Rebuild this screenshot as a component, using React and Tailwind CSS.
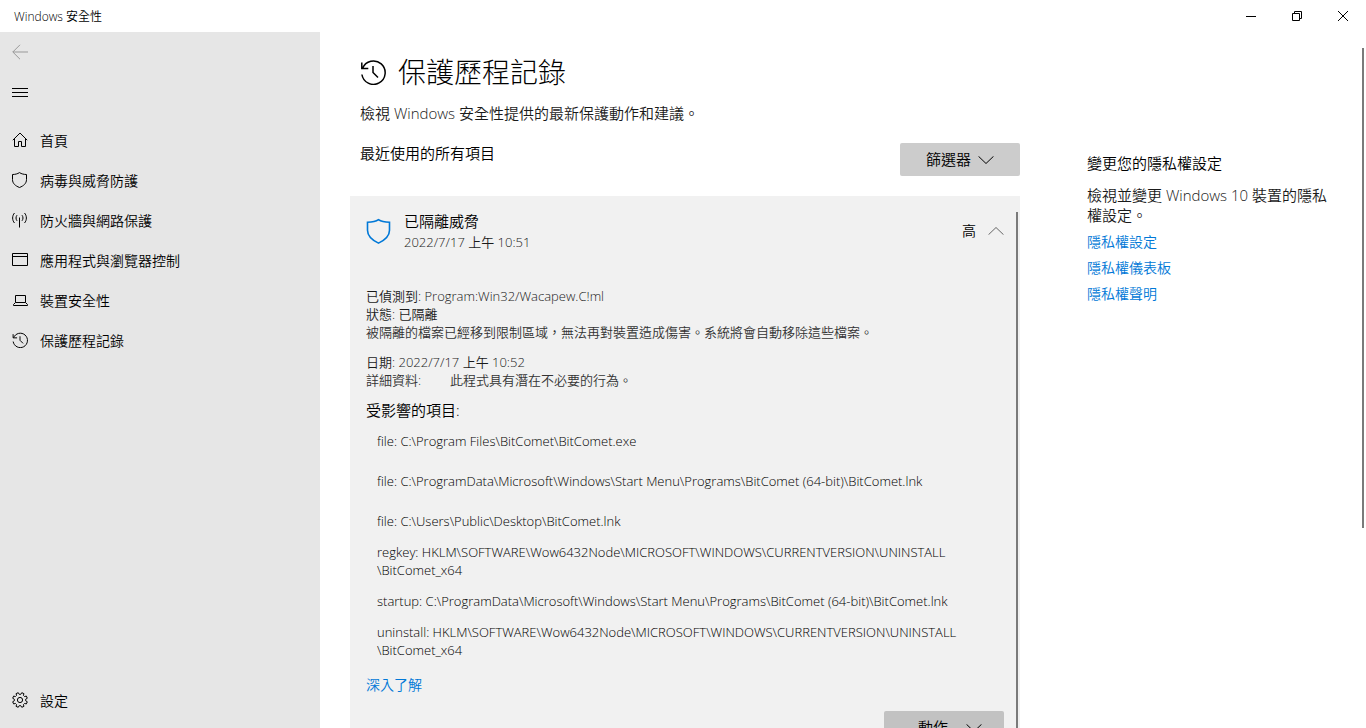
const svgProps = {
  fill: 'none',
  stroke: 'currentColor',
  strokeWidth: 1,
  'aria-hidden': true,
}

function BackIcon() {
  return (
    <svg className="size-4" viewBox="0 0 16 16" {...svgProps}>
      <path d="M16 8H.8M8 .8L.8 8 8 15.2" />
    </svg>
  )
}

function MenuIcon() {
  return (
    <svg className="size-4" viewBox="0 0 16 16" {...svgProps}>
      <path d="M0 4.5h16M0 8.5h16M0 12.5h16" />
    </svg>
  )
}

function HomeIcon() {
  return (
    <svg className="size-4" viewBox="0 0 16 16" {...svgProps}>
      <path d="M.8 8.2L8 1l7.2 7.2M2.5 6.8v7.7h4v-5h3v5h4V6.8" />
    </svg>
  )
}

function ShieldIcon() {
  return (
    <svg className="size-4" viewBox="0 0 16 16" {...svgProps}>
      <path d="M7.5.6C5.6 1.9 3 2.5.5 2.5v5c0 4 2.8 6.3 7 8 4.2-1.7 7-4 7-8v-5C12 2.5 9.4 1.9 7.5.6z" />
    </svg>
  )
}

function NetworkIcon() {
  return (
    <svg className="size-4" viewBox="0 0 16 16" {...svgProps}>
      <path d="M7.5 5.5v10M2.5 1c-2.5 2.8-2.5 7.2 0 10M12.5 1c2.5 2.8 2.5 7.2 0 10M5 3.2c-1.3 1.7-1.3 3.9 0 5.6M10 3.2c1.3 1.7 1.3 3.9 0 5.6" />
    </svg>
  )
}

function AppIcon() {
  return (
    <svg className="size-4" viewBox="0 0 16 16" {...svgProps}>
      <path d="M.5 1.5h15v12H.5zM.5 4.5h15" />
    </svg>
  )
}

function LaptopIcon() {
  return (
    <svg className="size-4" viewBox="0 0 16 16" {...svgProps}>
      <path d="M3.5 3.5h10v7h-10zM3.5 10.5l-2 2v1h14v-1l-2-2" />
    </svg>
  )
}

function HistoryIcon({ className = 'size-4', strokeWidth = 1.6 }) {
  return (
    <svg className={className} viewBox="0 0 26 26" {...svgProps} strokeWidth={strokeWidth}>
      <path d="M2.6 9.3A11.7 11.7 0 1 1 1.9 15.5M1.8 3.5v6h6.5M13 7v6.5l5 5" />
    </svg>
  )
}

function GearIcon() {
  const teeth = Array.from({ length: 8 }, (_, i) => {
    return [[-15, 5.7], [-9, 7.5], [9, 7.5], [15, 5.7]].map(([offset, r]) => {
      const a = ((i * 45 + 22.5 + offset) * Math.PI) / 180
      return `${(8 + r * Math.cos(a)).toFixed(2)} ${(8 + r * Math.sin(a)).toFixed(2)}`
    })
  }).flat()

  return (
    <svg className="size-4" viewBox="0 0 16 16" {...svgProps} strokeLinejoin="round">
      <path d={`M${teeth.join('L')}z`} />
      <circle cx="8" cy="8" r="2.6" />
    </svg>
  )
}

function Chevron({ up = false }) {
  return (
    <svg className="h-2 w-4" viewBox="0 0 16 8" {...svgProps}>
      <path d={up ? 'M.5 7.7L8 .5l7.5 7.2' : 'M.5.3L8 7.5 15.5.3'} />
    </svg>
  )
}

const navItems = [
  { label: '首頁', icon: HomeIcon },
  { label: '病毒與威脅防護', icon: ShieldIcon },
  { label: '防火牆與網路保護', icon: NetworkIcon },
  { label: '應用程式與瀏覽器控制', icon: AppIcon },
  { label: '裝置安全性', icon: LaptopIcon },
  { label: '保護歷程記錄', icon: HistoryIcon },
]

const affectedItems = [
  { text: 'file: C:\\Program Files\\BitComet\\BitComet.exe', gap: 'mb-[22px]' },
  {
    text: 'file: C:\\ProgramData\\Microsoft\\Windows\\Start Menu\\Programs\\BitComet (64-bit)\\BitComet.lnk',
    gap: 'mb-[22px]',
  },
  { text: 'file: C:\\Users\\Public\\Desktop\\BitComet.lnk', gap: 'mb-[13px]' },
  {
    text: 'regkey: HKLM\\SOFTWARE\\Wow6432Node\\MICROSOFT\\WINDOWS\\CURRENTVERSION\\UNINSTALL',
    rest: '\\BitComet_x64',
    gap: 'mb-[13px]',
  },
  {
    text: 'startup: C:\\ProgramData\\Microsoft\\Windows\\Start Menu\\Programs\\BitComet (64-bit)\\BitComet.lnk',
    gap: 'mb-[13px]',
  },
  {
    text: 'uninstall: HKLM\\SOFTWARE\\Wow6432Node\\MICROSOFT\\WINDOWS\\CURRENTVERSION\\UNINSTALL',
    rest: '\\BitComet_x64',
    gap: 'mb-4',
  },
]

const privacyLinks = ['隱私權設定', '隱私權儀表板', '隱私權聲明']

function TitleBar() {
  return (
    <header className="flex h-8 shrink-0 items-center justify-between pl-[14px]">
      <span className="pt-[2px] text-xs">Windows 安全性</span>
      <div className="flex h-full">
        <button type="button" aria-label="最小化" className="flex w-[46px] items-center justify-center">
          <svg className="size-[10px]" viewBox="0 0 10 10" {...svgProps}>
            <path d="M0 5.5h10" />
          </svg>
        </button>
        <button type="button" aria-label="還原" className="flex w-[46px] items-center justify-center">
          <svg className="size-[10px]" viewBox="0 0 10 10" {...svgProps}>
            <path d="M.5 2.5h7v7h-7zM2.5 2.5v-2h7v7h-2" />
          </svg>
        </button>
        <button type="button" aria-label="關閉" className="flex w-[46px] items-center justify-center">
          <svg className="size-[10px]" viewBox="0 0 10 10" {...svgProps}>
            <path d="M0 0l10 10M10 0L0 10" />
          </svg>
        </button>
      </div>
    </header>
  )
}

function NavItem({ label, icon: Icon }) {
  return (
    <a href="#" className="flex h-10 items-center gap-3 px-3 text-sm">
      <Icon />
      <span className="pt-px">{label}</span>
    </a>
  )
}

function Sidebar() {
  return (
    <aside className="flex w-80 shrink-0 flex-col bg-[#e6e6e6] pb-2">
      <button type="button" aria-label="上一頁" className="flex h-10 items-center px-3 text-[#999999]">
        <BackIcon />
      </button>
      <button type="button" aria-label="功能表" className="flex h-10 items-center px-3">
        <MenuIcon />
      </button>
      <nav className="mt-2 flex flex-1 flex-col">
        {navItems.map((item) => (
          <NavItem key={item.label} {...item} />
        ))}
        <div className="mt-auto">
          <NavItem label="設定" icon={GearIcon} />
        </div>
      </nav>
    </aside>
  )
}

function ThreatCard() {
  return (
    <section className="mt-5 flex min-h-0 flex-1 overflow-hidden bg-[#f1f1f1] pl-4">
      <div className="min-w-0 flex-1 pt-[14px] pr-3">
        <div className="flex items-center">
          <svg
            className="size-[26px] shrink-0 text-[#0078d7]"
            viewBox="0 0 26 26"
            {...svgProps}
            strokeWidth="1.6"
          >
            <path d="M12.5 1.7C9.5 3.8 5 4.2 1.5 4.2v8c0 6 4.5 9.8 11 12.9 6.5-3.1 11-6.9 11-12.9v-8c-3.5 0-8-.4-11-2.5z" />
          </svg>
          <div className="ml-3 flex-1">
            <h2 className="text-[15px] leading-[22px]">已隔離威脅</h2>
            <p className="text-[13px] leading-5 text-[#1a1a1a]">2022/7/17 上午 10:51</p>
          </div>
          <span className="text-sm">高</span>
          <button type="button" aria-label="收合" className="ml-3 flex h-8 items-center text-[#666666]">
            <Chevron up />
          </button>
        </div>

        <div className="mt-[35px] text-[13px] leading-[18px] text-[#1a1a1a]">
          <p>已偵測到: Program:Win32/Wacapew.C!ml</p>
          <p>狀態: 已隔離</p>
          <p className="text-[#333333]">
            被隔離的檔案已經移到限制區域，無法再對裝置造成傷害。系統將會自動移除這些檔案。
          </p>
          <p className="mt-3">日期: 2022/7/17 上午 10:52</p>
          <p className="flex text-[#333333]">
            <span className="w-[84px]">詳細資料:</span>
            <span>此程式具有潛在不必要的行為。</span>
          </p>
        </div>

        <h3 className="mt-[11px] text-[15px] leading-5">受影響的項目:</h3>
        <ul className="mt-3 pl-[11px] text-[13px] leading-[18px] text-black">
          {affectedItems.map((item) => (
            <li key={item.text} className={item.gap}>
              {item.text}
              {item.rest && <span className="block">{item.rest}</span>}
            </li>
          ))}
        </ul>
        <a href="#" className="block text-sm text-[#0078d7]">
          深入了解
        </a>
        <button
          type="button"
          className="mt-4 ml-auto flex h-[33px] w-[120px] items-center gap-[18px] rounded-xs bg-[#c2c2c2] pl-[34px] text-[15px]"
        >
          動作
          <Chevron />
        </button>
      </div>
      <div className="mt-4 mr-[2px] w-[2px] bg-[#7a7a7a]" />
    </section>
  )
}

export default function App() {
  return (
    <div className="flex h-screen flex-col overflow-hidden bg-white font-['Open_Sans','Noto_Sans_CJK_TC',sans-serif] font-[350] text-black">
      <TitleBar />
      <div className="flex min-h-0 flex-1">
        <Sidebar />
        <main className="flex min-w-0 flex-1 pl-[30px]">
          <div className="flex min-w-0 flex-1 flex-col pt-5">
            <div className="flex items-center gap-3 pl-[10px]">
              <HistoryIcon className="size-[26px]" strokeWidth={1.5} />
              <h1 className="text-[28px] leading-10 font-light">保護歷程記錄</h1>
            </div>
            <p className="mt-[11px] pl-[10px] text-[15px] leading-5 text-[#1a1a1a]">
              檢視 Windows 安全性提供的最新保護動作和建議。
            </p>
            <div className="mt-5 flex justify-between pl-[10px]">
              <h2 className="text-[15px] leading-5">最近使用的所有項目</h2>
              <button
                type="button"
                className="flex h-[33px] w-[120px] items-center justify-center gap-[7px] rounded-xs bg-[#cccccc] text-[15px]"
              >
                篩選器
                <Chevron />
              </button>
            </div>
            <ThreatCard />
          </div>

          <aside className="ml-[67px] w-[246px] shrink-0 pt-[121px]">
            <h2 className="text-[15px] leading-5">變更您的隱私權設定</h2>
            <p className="mt-3 text-[15px] leading-5 text-[#1a1a1a]">
              檢視並變更 Windows 10 裝置的隱私權設定。
            </p>
            <ul className="mt-[7px] flex flex-col gap-[6px] text-sm text-[#0078d7]">
              {privacyLinks.map((label) => (
                <li key={label}>
                  <a href="#">{label}</a>
                </li>
              ))}
            </ul>
          </aside>
          <div className="mt-4 mr-[2px] ml-[29px] h-[69%] w-[2px] bg-[#7a7a7a]" />
        </main>
      </div>
    </div>
  )
}
